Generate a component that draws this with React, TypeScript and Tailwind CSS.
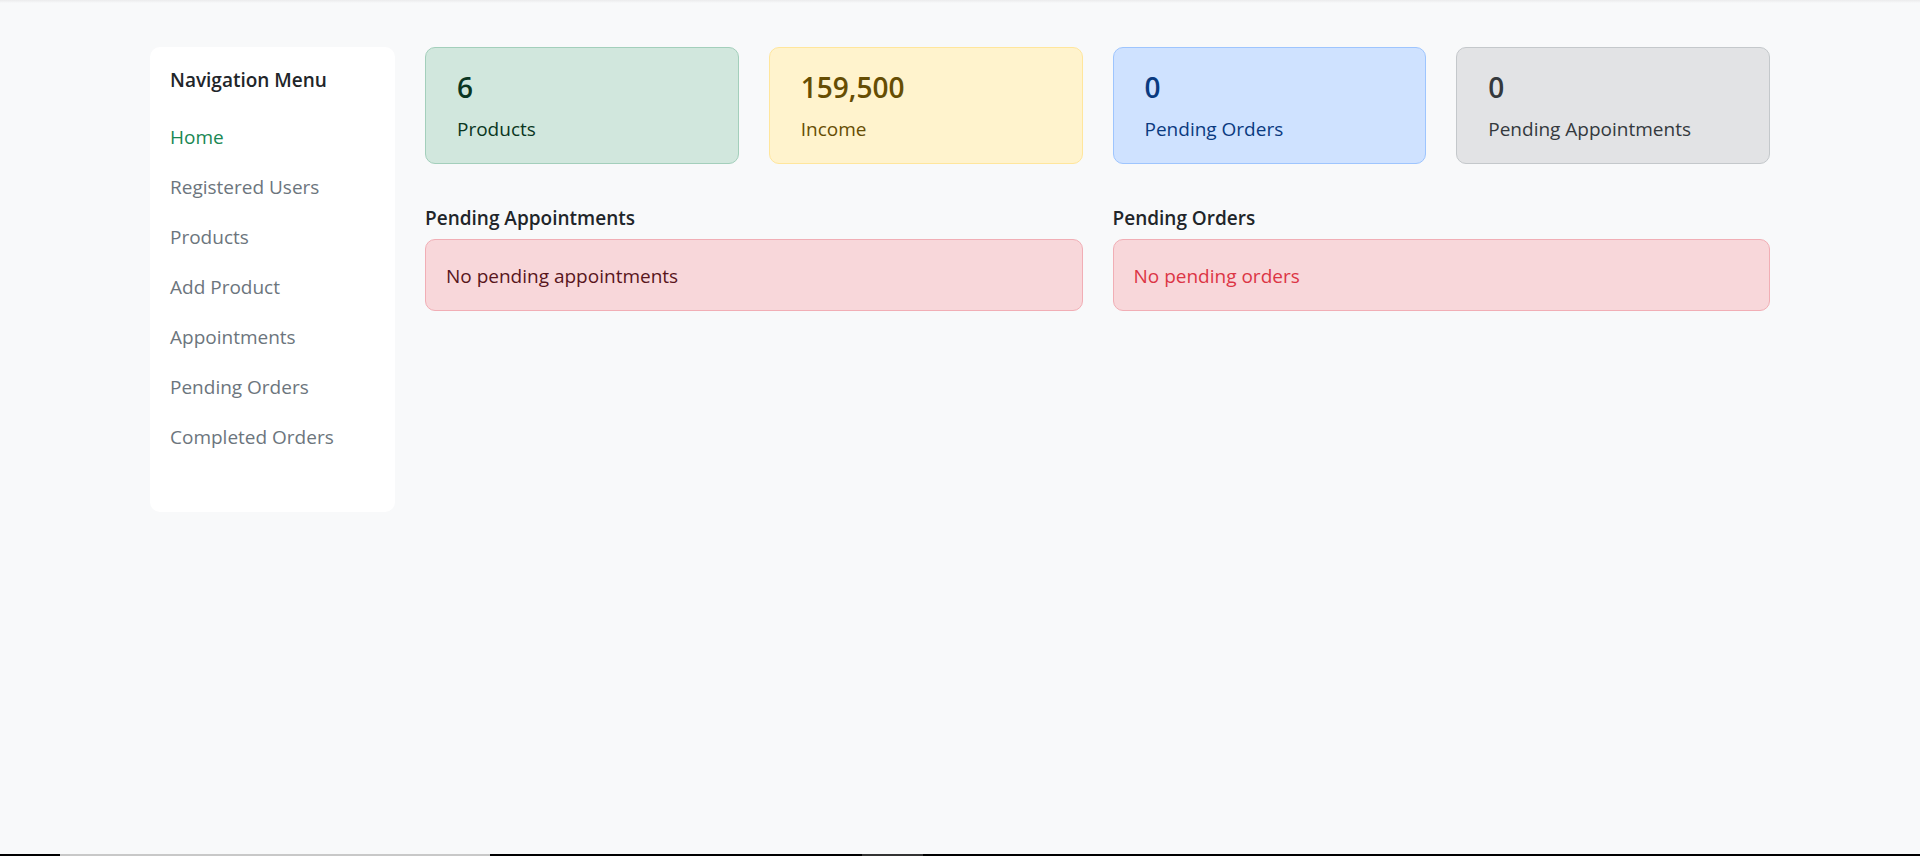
import React from 'react';

const navItems = [
  'Home',
  'Registered Users',
  'Products',
  'Add Product',
  'Appointments',
  'Pending Orders',
  'Completed Orders',
];

const stats = [
  { value: '6', label: 'Products', box: 'bg-[#d1e7dd] border-[#a3cfbb] text-[#0a3622]' },
  { value: '159,500', label: 'Income', box: 'bg-[#fff3cd] border-[#ffe69c] text-[#664d03]' },
  { value: '0', label: 'Pending Orders', box: 'bg-[#cfe2ff] border-[#9ec5fe] text-[#0a3a80]' },
  { value: '0', label: 'Pending Appointments', box: 'bg-[#e2e3e5] border-[#c4c8cb] text-[#34393d]' },
];

function Sidebar() {
  return (
    <aside className="w-[245px] shrink-0 self-start rounded-[10px] bg-white px-[20px] pt-[21px] pb-[50px]">
      <h6 className="mb-[20px] text-[19px] leading-[24px] font-semibold text-[#212529]">Navigation Menu</h6>
      <nav className="flex flex-col">
        {navItems.map((item, i) => (
          <a
            key={item}
            href="#"
            className={
              'py-[10px] text-[19px] leading-[30px] ' +
              (i === 0 ? 'text-[#198754]' : 'text-[#6c757d]')
            }
          >
            {item}
          </a>
        ))}
      </nav>
    </aside>
  );
}

function StatCard({ value, label, box }: { value: string; label: string; box: string }) {
  return (
    <div className={'rounded-[10px] border px-[31px] pt-[21px] pb-[19px] ' + box}>
      <h4 className="mb-[9px] text-[28px] leading-[36px] font-semibold">{value}</h4>
      <p className="text-[19px] leading-[30px]">{label}</p>
    </div>
  );
}

function EmptyPanel({ title, text, tone }: { title: string; text: string; tone: string }) {
  return (
    <div>
      <h5 className="mb-[9px] text-[19px] leading-[24px] font-semibold text-[#212529]">{title}</h5>
      <div className={'rounded-[10px] border border-[#f1aeb5] bg-[#f8d7da] px-[20px] pt-[21px] pb-[19px] text-[19px] leading-[30px] ' + tone}>
        {text}
      </div>
    </div>
  );
}

export default function App() {
  return (
    <div
      className="flex h-[856px] flex-col bg-[#f8f9fa]"
      style={{ fontFamily: '"Open Sans", "Noto Sans", sans-serif' }}
    >
      <div className="h-[3px] bg-gradient-to-b from-[#ebebec] to-[#f8f9fa]" />
      <div className="flex flex-1 justify-center pt-[44px]">
        <div className="flex w-[1620px] gap-[30px]">
          <Sidebar />
          <main className="flex-1">
            {/* Stat cards */}
            <div className="grid grid-cols-4 gap-[30px]">
              {stats.map((s) => (
                <StatCard key={s.label} {...s} />
              ))}
            </div>

            {/* Pending lists */}
            <div className="mt-[42px] grid grid-cols-2 gap-[30px]">
              <EmptyPanel title="Pending Appointments" text="No pending appointments" tone="text-[#58151c]" />
              <EmptyPanel title="Pending Orders" text="No pending orders" tone="text-[#dc3545]" />
            </div>
          </main>
        </div>
      </div>
      {/* bottom edge strip */}
      <div className="flex h-[2px] bg-black">
        <div className="ml-[60px] w-[430px] bg-[#c8c8c8]" />
        <div className="ml-[372px] w-[61px] bg-[#333333]" />
      </div>
    </div>
  );
}
